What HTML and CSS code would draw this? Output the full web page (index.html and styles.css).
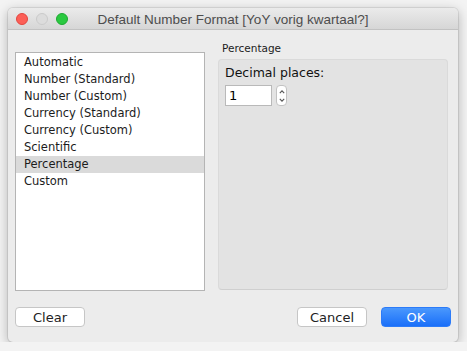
FILE: index.html
```html
<!DOCTYPE html>
<html lang="en">
<head>
  <meta charset="UTF-8">
  <title>Default Number Format</title>
  <link rel="stylesheet" href="styles.css">
</head>
<body>
  <div class="window">
    <div class="title-bar">
      <div class="lights">
        <span class="light close"></span>
        <span class="light min"></span>
        <span class="light zoom"></span>
      </div>
      <div class="title">Default Number Format [YoY vorig kwartaal?]</div>
    </div>

    <div class="content">
      <ul class="format-list">
        <li>Automatic</li>
        <li>Number (Standard)</li>
        <li>Number (Custom)</li>
        <li>Currency (Standard)</li>
        <li>Currency (Custom)</li>
        <li>Scientific</li>
        <li class="selected">Percentage</li>
        <li>Custom</li>
      </ul>

      <div class="details">
        <div class="details-label">Percentage</div>
        <div class="panel">
          <div class="field-label">Decimal places:</div>
          <div class="field-row">
            <input class="num-input" type="text" value="1">
            <div class="stepper">
              <svg width="6" height="16" viewBox="0 0 6 16">
                <path d="M0.8 5.2 L3 2.8 L5.2 5.2" fill="none" stroke="#555" stroke-width="1.1"/>
                <path d="M0.8 10.8 L3 13.2 L5.2 10.8" fill="none" stroke="#555" stroke-width="1.1"/>
              </svg>
            </div>
          </div>
        </div>
      </div>
    </div>

    <div class="buttons">
      <button class="btn">Clear</button>
      <div class="spacer"></div>
      <button class="btn">Cancel</button>
      <button class="btn primary">OK</button>
    </div>
  </div>
</body>
</html>
```

FILE: styles.css
```css
body {
  margin: 0;
  background-color: #f3f3f3;
  font-family: 'DejaVu Sans', sans-serif;
  color: #1c1c1c;
}

.window {
  margin: 8px 0 0 8px;
  width: 450px;
  height: 334px;
  background-color: #ececec;
  border-radius: 5px;
  box-shadow: 0 3px 12px rgba(0, 0, 0, 0.28), 0 0 0 1px rgba(0, 0, 0, 0.08);
  display: flex;
  flex-direction: column;
  overflow: hidden;
}

.title-bar {
  flex-shrink: 0;
  height: 21px;
  position: relative;
  background: linear-gradient(#ebebeb, #d6d6d6);
  border-bottom: 1px solid #c2c2c2;
  display: flex;
  align-items: center;
  justify-content: center;
}

.lights {
  position: absolute;
  left: 8px;
  top: 5px;
  display: flex;
  gap: 8px;
}

.light {
  width: 12px;
  height: 12px;
  border-radius: 50%;
  box-sizing: border-box;
}

.close {
  background-color: #fc5f57;
  border: 1px solid #e2463f;
}

.min {
  background-color: #dcdcdc;
  border: 1px solid #cacaca;
}

.zoom {
  background-color: #2ac940;
  border: 1px solid #1ea932;
}

.title {
  font-family: 'Liberation Sans', sans-serif;
  font-size: 13.5px;
  color: #4d4d4d;
  margin-top: 1px;
}

.content {
  flex: 1;
  display: flex;
  gap: 13px;
  padding: 10px 10px 0 7px;
}

.format-list {
  list-style: none;
  margin: 12px 0 0 0;
  padding: 1px 0 0 0;
  width: 190px;
  height: 239px;
  box-sizing: border-box;
  background-color: #fff;
  border: 1px solid #b4b4b4;
  font-size: 11.5px;
}

.format-list li {
  height: 17px;
  line-height: 17px;
  padding-left: 8px;
}

.format-list li.selected {
  background-color: #dadada;
}

.details {
  flex: 1;
  display: flex;
  flex-direction: column;
}

.details-label {
  font-size: 10.5px;
  line-height: 14px;
  padding-left: 4px;
  margin: 1px 0 4px 0;
}

.panel {
  height: 231px;
  box-sizing: border-box;
  background-color: #e3e3e3;
  border: 1px solid #dadada;
  border-bottom-color: #cfcfcf;
  border-radius: 4px;
  padding: 5px 0 0 6px;
}

.field-label {
  font-size: 12.5px;
  line-height: 16px;
  color: #111;
}

.field-row {
  display: flex;
  align-items: center;
  gap: 4px;
  margin-top: 4px;
}

.num-input {
  width: 47px;
  height: 21px;
  box-sizing: border-box;
  border: 1px solid #b9b9b9;
  background-color: #fff;
  font-family: 'DejaVu Sans', sans-serif;
  font-size: 13px;
  padding: 0 3px;
  margin: 0;
  outline: none;
}

.stepper {
  width: 11px;
  height: 21px;
  box-sizing: border-box;
  background-color: #fff;
  border: 1px solid #c2c2c2;
  border-radius: 4px;
  display: flex;
  align-items: center;
  justify-content: center;
}

.buttons {
  flex-shrink: 0;
  display: flex;
  gap: 14px;
  padding: 16px 7px 15px 7px;
}

.spacer {
  flex: 1;
}

.btn {
  width: 70px;
  height: 20px;
  box-sizing: border-box;
  background-color: #fff;
  border: 1px solid #c6c6c6;
  border-radius: 4px;
  font-family: 'DejaVu Sans', sans-serif;
  font-size: 13px;
  color: #222;
  padding: 0;
  margin: 0;
}

.btn.primary {
  background: linear-gradient(#4a98fd, #1a6ff9);
  border-color: #2c7bf8;
  color: #fff;
}
```
